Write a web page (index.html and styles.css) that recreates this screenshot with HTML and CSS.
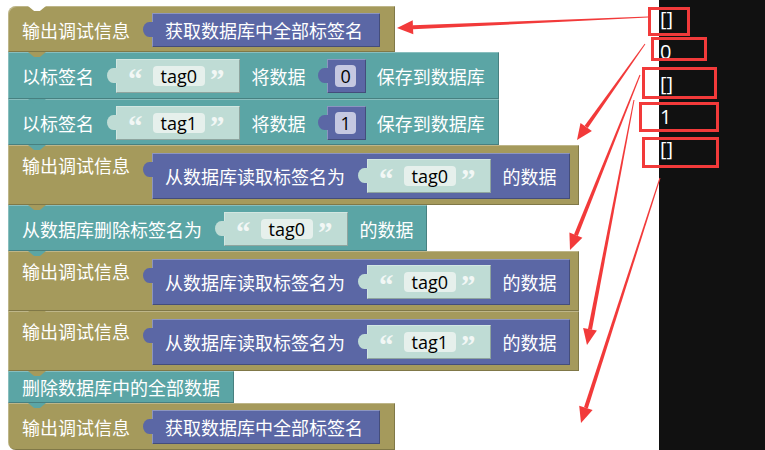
FILE: index.html
```html
<!DOCTYPE html>
<html lang="zh">
<head>
<meta charset="utf-8">
<link rel="stylesheet" href="styles.css">
</head>
<body>
<div class="page">
  <main class="workspace">
    <div class="block olive first">
      <span class="label">输出调试信息</span>
      <div class="val purple"><span>获取数据库中全部标签名</span></div>
    </div>
    <div class="block teal b2">
      <span class="label">以标签名</span>
      <div class="val str"><span class="q q1">“</span><span class="field">tag0</span><span class="q q2">”</span></div>
      <span class="label">将数据</span>
      <div class="val num"><span class="nfield">0</span></div>
      <span class="label">保存到数据库</span>
    </div>
    <div class="block teal">
      <span class="label">以标签名</span>
      <div class="val str"><span class="q q1">“</span><span class="field">tag1</span><span class="q q2">”</span></div>
      <span class="label">将数据</span>
      <div class="val num"><span class="nfield">1</span></div>
      <span class="label">保存到数据库</span>
    </div>
    <div class="block olive tall">
      <span class="label">输出调试信息</span>
      <div class="val purple tallv">
        <span>从数据库读取标签名为</span>
        <div class="val str"><span class="q q1">“</span><span class="field">tag0</span><span class="q q2">”</span></div>
        <span>的数据</span>
      </div>
    </div>
    <div class="block teal">
      <span class="label">从数据库删除标签名为</span>
      <div class="val str"><span class="q q1">“</span><span class="field">tag0</span><span class="q q2">”</span></div>
      <span class="label">的数据</span>
    </div>
    <div class="block olive tall">
      <span class="label">输出调试信息</span>
      <div class="val purple tallv">
        <span>从数据库读取标签名为</span>
        <div class="val str"><span class="q q1">“</span><span class="field">tag0</span><span class="q q2">”</span></div>
        <span>的数据</span>
      </div>
    </div>
    <div class="block olive tall">
      <span class="label">输出调试信息</span>
      <div class="val purple tallv">
        <span>从数据库读取标签名为</span>
        <div class="val str"><span class="q q1">“</span><span class="field">tag1</span><span class="q q2">”</span></div>
        <span>的数据</span>
      </div>
    </div>
    <div class="block teal plain">
      <span class="label">删除数据库中的全部数据</span>
    </div>
    <div class="block olive last">
      <span class="label">输出调试信息</span>
      <div class="val purple"><span>获取数据库中全部标签名</span></div>
    </div>
  </main>
  <aside class="console">
    <div class="line">[]</div>
    <div class="line">0</div>
    <div class="line">[]</div>
    <div class="line">1</div>
    <div class="line">[]</div>
  </aside>
</div>
<svg class="marks" width="765" height="450" viewBox="0 0 765 450">
  <g fill="#f23a3a">
    <polygon points="647.98,16.5 412.9,25.3 413.1,29.3 648.02,17.5"/>
    <polygon points="397,28 412.7,20.3 413.3,34.3"/>
    <polygon points="644.6,43.7 584.6,125.7 587.8,128.1 645.4,44.3"/>
    <polygon points="577,140 580.5,122.9 591.9,130.9"/>
    <polygon points="639.5,74.8 574.0,234.5 577.8,235.9 640.5,75.2"/>
    <polygon points="570,250 569.4,232.6 582.4,237.8"/>
    <polygon points="633.5,99.9 588.0,328.9 592.0,329.7 634.5,100.1"/>
    <polygon points="587,345 583.1,328.0 596.9,330.6"/>
    <polygon points="659.5,177.8 584.0,407.2 587.8,408.4 660.5,178.2"/>
    <polygon points="581,423 579.2,405.7 592.6,409.9"/>
  </g>
  <g fill="none" stroke="#f23a3a" stroke-width="3">
    <rect x="649.5" y="8.5" width="39" height="26"/>
    <rect x="652.5" y="38.5" width="53" height="21"/>
    <rect x="643.5" y="68.5" width="72" height="29"/>
    <rect x="640.5" y="103.5" width="77" height="27"/>
    <rect x="643.5" y="138.5" width="74" height="28"/>
  </g>
</svg>
</body>
</html>
```

FILE: styles.css
```css
html, body {
  margin: 0;
  padding: 0;
  background: #ffffff;
}

body {
  position: relative;
  width: 765px;
  height: 450px;
  overflow: hidden;
  font-family: "Noto Sans CJK SC", "Noto Sans", sans-serif;
}

.page {
  display: flex;
  height: 450px;
}

.workspace {
  width: 659px;
  box-sizing: border-box;
  padding: 6px 0 0 8px;
  display: flex;
  flex-direction: column;
  align-items: flex-start;
}

.console {
  width: 106px;
  background: #111111;
  color: #ffffff;
  font-family: "Open Sans", "Noto Sans", sans-serif;
  font-size: 20px;
  line-height: 32.5px;
  padding: 3px 0 0 1px;
  box-sizing: border-box;
}

.line {
  height: 32.5px;
}

/* statement blocks */
.block {
  position: relative;
  display: flex;
  align-items: center;
  gap: 11px;
  color: #ffffff;
  font-size: 18px;
  line-height: 34px;
  white-space: nowrap;
  box-shadow: inset 1px 1px 0 rgba(255, 255, 255, 0.28), inset -1px -1px 0 rgba(0, 0, 0, 0.22);
}

.block::after {
  content: "";
  position: absolute;
  left: 20px;
  bottom: -5px;
  width: 18px;
  height: 5px;
  background: inherit;
  clip-path: polygon(0 0, 100% 0, 66% 100%, 34% 100%);
  z-index: 2;
}

.first {
  border-top-left-radius: 8px;
}

.first::before {
  content: "";
  position: absolute;
  left: 20px;
  top: 0;
  width: 18px;
  height: 5px;
  background: #ffffff;
  clip-path: polygon(0 0, 100% 0, 66% 100%, 34% 100%);
}

.last {
  border-bottom-left-radius: 8px;
}

.last::after {
  display: none;
}

.olive {
  background: #a59a5c;
  align-items: flex-start;
  padding: 7px 15px 5px 14px;
}

.olive.last {
  padding-bottom: 6px;
}

.olive.tall {
  padding: 8px 9px 6px 14px;
}

.olive.tall > .label {
  line-height: 24px;
}

.teal {
  background: #5ba5a5;
  padding: 7px 14px 5px 14px;
}

.teal.b2 {
  padding-bottom: 6px;
}

.teal.plain {
  padding: 0 14px;
  line-height: 32px;
}

/* value blocks */
.val {
  position: relative;
  display: flex;
  align-items: center;
  margin-left: 11px;
  box-shadow: inset 1px 1px 0 rgba(255, 255, 255, 0.3), inset -1px -1px 0 rgba(0, 0, 0, 0.25);
}

.val::before {
  content: "";
  position: absolute;
  left: -9px;
  top: 9px;
  width: 10px;
  height: 15px;
  background: inherit;
  border-radius: 70% 0 0 70% / 55% 0 0 55%;
}

.purple {
  background: #5b67a5;
  padding: 0 17px 0 13px;
  height: 34px;
}

.purple.tallv {
  height: auto;
  padding: 6px 14px 6px 13px;
  gap: 11px;
}

.str {
  background: #bfdcd5;
  height: 34px;
  padding: 0 16px 0 12px;
}

.q {
  font-family: "Liberation Serif", serif;
  font-weight: bold;
  font-size: 29px;
  color: #f2f7f5;
  line-height: 34px;
  position: relative;
  top: 3px;
}

.q1 {
  margin-right: 10px;
}

.q2 {
  margin-left: 5px;
}

.field {
  background: #e6f0ec;
  color: #000000;
  border-radius: 4px;
  height: 20px;
  line-height: 20px;
  padding: 0 8px;
  font-family: "Open Sans", "Noto Sans", sans-serif;
  font-size: 18px;
}

.num {
  background: #5b67a5;
  height: 34px;
  padding: 0 10px 0 8px;
}

.nfield {
  background: #c5c8e1;
  color: #000000;
  border-radius: 4px;
  height: 22px;
  line-height: 22px;
  padding: 0 5px;
  font-family: "Open Sans", "Noto Sans", sans-serif;
  font-size: 18px;
}

.marks {
  position: absolute;
  left: 0;
  top: 0;
  pointer-events: none;
}
```
